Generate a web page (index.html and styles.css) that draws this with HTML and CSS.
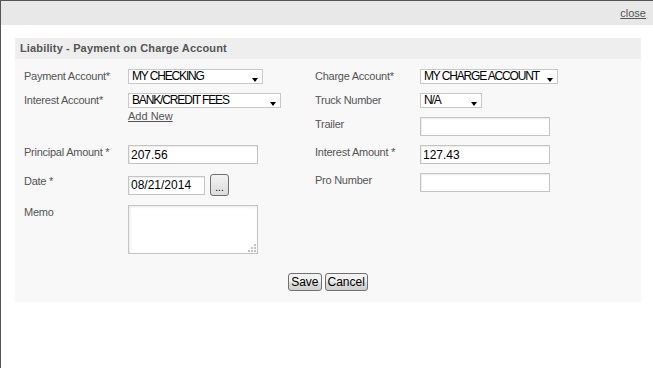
FILE: index.html
```html
<!DOCTYPE html>
<html lang="en">
<head>
    <meta charset="UTF-8">
    <title>Liability - Payment on Charge Account</title>
    <link rel="stylesheet" href="styles.css">
</head>
<body>

    <div class="dialog">
        <div class="topbar">
            <a href="#" class="close-link">close</a>
        </div>

        <div class="content">
            <div class="panel">
                <div class="panel-title">Liability - Payment on Charge Account</div>

                <form id="paymentForm" class="panel-body">
                    <div class="columns">
                        <div class="col col-left">
                            <div class="row row-24">
                                <label class="lbl">Payment Account*</label>
                                <span class="select-wrap w135">
                                    <select class="sel"><option>MY CHECKING</option></select>
                                </span>
                            </div>
                            <div class="row row-52">
                                <label class="lbl">Interest Account*</label>
                                <div class="field-stack">
                                    <span class="select-wrap w153">
                                        <select class="sel"><option>BANK/CREDIT FEES</option></select>
                                    </span>
                                    <a href="#" class="add-new">Add New</a>
                                </div>
                            </div>
                            <div class="row row-29">
                                <label class="lbl">Principal Amount *</label>
                                <input type="text" class="txt" value="207.56">
                            </div>
                            <div class="row row-31">
                                <label class="lbl">Date *</label>
                                <div class="date-field">
                                    <input type="text" class="txt txt-date" value="08/21/2014">
                                    <button type="button" class="btn-dots">...</button>
                                </div>
                            </div>
                            <div class="row">
                                <label class="lbl">Memo</label>
                                <span class="memo-wrap">
                                    <textarea class="memo"></textarea>
                                    <svg class="grip" width="8" height="8" viewBox="0 0 8 8">
                                        <rect x="6" y="0" width="2" height="2" fill="#c4c4c4"/>
                                        <rect x="3" y="3" width="2" height="2" fill="#c4c4c4"/>
                                        <rect x="6" y="3" width="2" height="2" fill="#c4c4c4"/>
                                        <rect x="0" y="6" width="2" height="2" fill="#c4c4c4"/>
                                        <rect x="3" y="6" width="2" height="2" fill="#c4c4c4"/>
                                        <rect x="6" y="6" width="2" height="2" fill="#c4c4c4"/>
                                    </svg>
                                </span>
                            </div>
                        </div>

                        <div class="col col-right">
                            <div class="row row-24">
                                <label class="lbl">Charge Account*</label>
                                <span class="select-wrap w138">
                                    <select class="sel"><option>MY CHARGE ACCOUNT</option></select>
                                </span>
                            </div>
                            <div class="row row-24">
                                <label class="lbl">Truck Number</label>
                                <span class="select-wrap w62">
                                    <select class="sel"><option>N/A</option></select>
                                </span>
                            </div>
                            <div class="row row-28">
                                <label class="lbl">Trailer</label>
                                <input type="text" class="txt" value="">
                            </div>
                            <div class="row row-28">
                                <label class="lbl">Interest Amount *</label>
                                <input type="text" class="txt" value="127.43">
                            </div>
                            <div class="row row-28">
                                <label class="lbl">Pro Number</label>
                                <input type="text" class="txt" value="">
                            </div>
                        </div>
                    </div>

                    <div class="actions">
                        <button type="submit" class="btn">Save</button>
                        <button type="button" class="btn">Cancel</button>
                    </div>
                </form>
            </div>
        </div>
    </div>

</body>
</html>
```

FILE: styles.css
```css
* {
    margin: 0;
    padding: 0;
    box-sizing: border-box;
}

body {
    font-family: "Liberation Sans", Arial, sans-serif;
    font-size: 11px;
    background-color: #fff;
    color: #555;
}

.dialog {
    height: 368px;
    border-left: 1px solid #555;
    border-top: 1px solid #555;
}

.topbar {
    height: 24px;
    background-color: #e8e8e8;
    text-align: right;
    padding: 6px 7px 0 0;
}

.close-link {
    color: #555;
    font-size: 11px;
}

.content {
    padding: 13px 12px 0 14px;
}

.panel {
    background-color: #f8f8f8;
}

.panel-title {
    height: 21px;
    line-height: 21px;
    background-color: #eee;
    padding-left: 5px;
    font-weight: bold;
    font-size: 11px;
    letter-spacing: 0.15px;
    color: #555;
}

.panel-body {
    padding: 10px 0 11px 9px;
}

.columns {
    display: flex;
}

.col-left {
    width: 291px;
}

.row {
    display: flex;
    align-items: flex-start;
}

.row-24 { height: 24px; }
.row-28 { height: 28px; }
.row-29 { height: 29px; }
.row-31 { height: 31px; }
.row-52 { height: 52px; }

.lbl {
    display: block;
    width: 104px;
    line-height: 14px;
    letter-spacing: -0.25px;
    flex-shrink: 0;
}

.col-right .lbl {
    width: 105px;
}

.select-wrap {
    position: relative;
    display: inline-block;
    height: 15px;
}

.select-wrap::after {
    content: "";
    position: absolute;
    right: 5px;
    bottom: 2px;
    border-top: 4px solid #000;
    border-left: 3px solid transparent;
    border-right: 3px solid transparent;
}

.w135 { width: 135px; }
.w153 { width: 153px; }
.w138 { width: 138px; }
.w62 { width: 62px; }

.sel {
    appearance: none;
    -webkit-appearance: none;
    width: 100%;
    height: 15px;
    border: 1px solid #c8c8c8;
    background-color: #fff;
    color: #000;
    font-family: "Liberation Sans", Arial, sans-serif;
    font-size: 12px;
    letter-spacing: -1.15px;
    line-height: 13px;
    padding: 0 0 0 3px;
    outline: none;
}

.field-stack {
    display: flex;
    flex-direction: column;
}

.add-new {
    color: #555;
    margin-top: 1px;
    line-height: 14px;
}

.txt {
    width: 130px;
    height: 19px;
    border: 1px solid #c4c4c4;
    box-shadow: inset 1px 1px 1px #ececec;
    background-color: #fff;
    color: #000;
    font-family: "Liberation Sans", Arial, sans-serif;
    font-size: 12px;
    padding: 0 2px;
    outline: none;
}

.date-field {
    display: flex;
    align-items: center;
    gap: 5px;
}

.txt-date {
    width: 77px;
}

.btn-dots {
    width: 19px;
    height: 22px;
    border: 1px solid #707070;
    border-radius: 3px;
    background: linear-gradient(#f3f3f3, #dcdcdc);
    font-size: 10px;
    line-height: 10px;
    color: #000;
    padding-top: 5px;
}

.memo-wrap {
    position: relative;
    display: inline-block;
    width: 130px;
    height: 49px;
}

.memo {
    display: block;
    width: 130px;
    height: 49px;
    border: 1px solid #c4c4c4;
    box-shadow: inset 1px 1px 3px #e8e8e8;
    background-color: #fff;
    resize: none;
    outline: none;
}

.grip {
    position: absolute;
    right: 2px;
    bottom: 2px;
}

.actions {
    display: flex;
    justify-content: center;
    gap: 3px;
    margin-top: 19px;
    padding-right: 9px;
}

.btn {
    height: 18px;
    border: 1px solid #707070;
    border-radius: 3px;
    background: linear-gradient(#f2f2f2 45%, #dddddd 55%, #cfcfcf);
    color: #000;
    font-family: "Liberation Sans", Arial, sans-serif;
    font-size: 12px;
    padding: 0 2px;
    cursor: pointer;
}
```
